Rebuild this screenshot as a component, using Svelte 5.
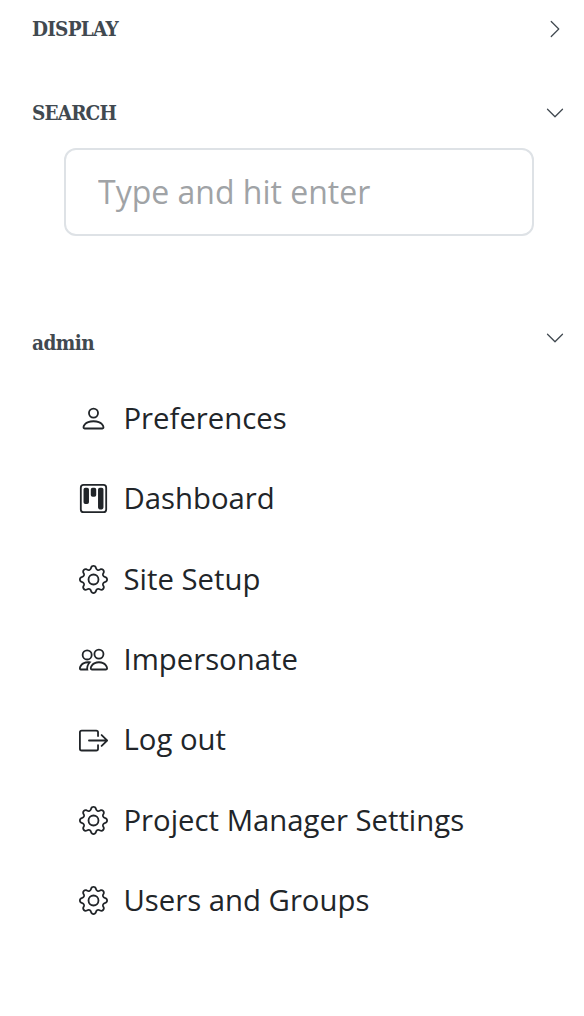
<script>
  const chevrons = {
    right: 'M4.646 1.646a.5.5 0 0 1 .708 0l6 6a.5.5 0 0 1 0 .708l-6 6a.5.5 0 0 1-.708-.708L10.293 8 4.646 2.354a.5.5 0 0 1 0-.708z',
    down: 'M1.646 4.646a.5.5 0 0 1 .708 0L8 10.293l5.646-5.647a.5.5 0 0 1 .708.708l-6 6a.5.5 0 0 1-.708 0l-6-6a.5.5 0 0 1 0-.708z'
  };

  const icons = {
    person: ['M8 8a3 3 0 1 0 0-6 3 3 0 0 0 0 6zm2-3a2 2 0 1 1-4 0 2 2 0 0 1 4 0zm4 8c0 1-1 1-1 1H3s-1 0-1-1 1-4 6-4 6 3 6 4zm-1-.004c-.001-.246-.154-.986-.832-1.664C11.516 10.68 10.289 10 8 10c-2.29 0-3.516.68-4.168 1.332-.678.678-.83 1.418-.832 1.664h10z'],
    kanban: [
      'M13.5 1a1 1 0 0 1 1 1v12a1 1 0 0 1-1 1h-11a1 1 0 0 1-1-1V2a1 1 0 0 1 1-1h11zm-11-1a2 2 0 0 0-2 2v12a2 2 0 0 0 2 2h11a2 2 0 0 0 2-2V2a2 2 0 0 0-2-2h-11z',
      'M6.5 3a1 1 0 0 1 1-1h1a1 1 0 0 1 1 1v3a1 1 0 0 1-1 1h-1a1 1 0 0 1-1-1V3zm-4 0a1 1 0 0 1 1-1h1a1 1 0 0 1 1 1v7a1 1 0 0 1-1 1h-1a1 1 0 0 1-1-1V3zm8 0a1 1 0 0 1 1-1h1a1 1 0 0 1 1 1v10a1 1 0 0 1-1 1h-1a1 1 0 0 1-1-1V3z'
    ],
    gear: [
      'M8 4.754a3.246 3.246 0 1 0 0 6.492 3.246 3.246 0 0 0 0-6.492zM5.754 8a2.246 2.246 0 1 1 4.492 0 2.246 2.246 0 0 1-4.492 0z',
      'M9.796 1.343c-.527-1.79-3.065-1.79-3.592 0l-.094.319a.873.873 0 0 1-1.255.52l-.292-.16c-1.64-.892-3.433.902-2.54 2.541l.159.292a.873.873 0 0 1-.52 1.255l-.319.094c-1.79.527-1.79 3.065 0 3.592l.319.094a.873.873 0 0 1 .52 1.255l-.16.292c-.892 1.64.901 3.434 2.541 2.54l.292-.159a.873.873 0 0 1 1.255.52l.094.319c.527 1.79 3.065 1.79 3.592 0l.094-.319a.873.873 0 0 1 1.255-.52l.292.16c1.64.893 3.434-.902 2.54-2.541l-.159-.292a.873.873 0 0 1 .52-1.255l.319-.094c1.79-.527 1.79-3.065 0-3.592l-.319-.094a.873.873 0 0 1-.52-1.255l.16-.292c.893-1.64-.902-3.433-2.541-2.54l-.292.159a.873.873 0 0 1-1.255-.52l-.094-.319zm-2.633.283c.246-.835 1.428-.835 1.674 0l.094.319a1.873 1.873 0 0 0 2.693 1.115l.291-.16c.764-.415 1.6.42 1.184 1.185l-.159.292a1.873 1.873 0 0 0 1.116 2.692l.318.094c.835.246.835 1.428 0 1.674l-.319.094a1.873 1.873 0 0 0-1.115 2.693l.16.291c.415.764-.42 1.6-1.185 1.184l-.291-.159a1.873 1.873 0 0 0-2.693 1.116l-.094.318c-.246.835-1.428.835-1.674 0l-.094-.319a1.873 1.873 0 0 0-2.692-1.115l-.292.16c-.764.415-1.6-.42-1.184-1.185l.159-.291A1.873 1.873 0 0 0 1.945 8.93l-.319-.094c-.835-.246-.835-1.428 0-1.674l.319-.094A1.873 1.873 0 0 0 3.06 4.377l-.16-.292c-.415-.764.42-1.6 1.185-1.184l.292.159a1.873 1.873 0 0 0 2.692-1.115l.094-.319z'
    ],
    people: ['M15 14s1 0 1-1-1-4-5-4-5 3-5 4 1 1 1 1h8zm-7.978-1A.261.261 0 0 1 7 12.996c.001-.264.167-1.03.76-1.72C8.312 10.629 9.282 10 11 10c1.717 0 2.687.63 3.24 1.276.593.69.758 1.457.76 1.72l-.008.002a.274.274 0 0 1-.014.002H7.022zM11 7a2 2 0 1 0 0-4 2 2 0 0 0 0 4zm3-2a3 3 0 1 1-6 0 3 3 0 0 1 6 0zM6.936 9.28a5.88 5.88 0 0 0-1.23-.247A7.35 7.35 0 0 0 5 9c-4 0-5 3-5 4 0 .667.333 1 1 1h4.216A2.238 2.238 0 0 1 5 13c0-1.01.377-2.042 1.09-2.904.243-.294.526-.569.846-.816zM4.92 10A5.493 5.493 0 0 0 4 13H1c0-.26.164-1.03.76-1.724.545-.636 1.492-1.256 3.16-1.275zM1.5 5.5a3 3 0 1 1 6 0 3 3 0 0 1-6 0zm3-2a2 2 0 1 0 0 4 2 2 0 0 0 0-4z'],
    logout: [
      'M10 12.5a.5.5 0 0 1-.5.5h-8a.5.5 0 0 1-.5-.5v-9a.5.5 0 0 1 .5-.5h8a.5.5 0 0 1 .5.5v2a.5.5 0 0 0 1 0v-2A1.5 1.5 0 0 0 9.5 2h-8A1.5 1.5 0 0 0 0 3.5v9A1.5 1.5 0 0 0 1.5 14h8a1.5 1.5 0 0 0 1.5-1.5v-2a.5.5 0 0 0-1 0v2z',
      'M15.854 8.354a.5.5 0 0 0 0-.708l-3-3a.5.5 0 0 0-.708.708L14.293 7.5H5.5a.5.5 0 0 0 0 1h8.793l-2.147 2.146a.5.5 0 0 0 .708.708l3-3z'
    ]
  };

  const items = [
    { label: 'Preferences', icon: 'person' },
    { label: 'Dashboard', icon: 'kanban' },
    { label: 'Site Setup', icon: 'gear' },
    { label: 'Impersonate', icon: 'people' },
    { label: 'Log out', icon: 'logout' },
    { label: 'Project Manager Settings', icon: 'gear' },
    { label: 'Users and Groups', icon: 'gear' }
  ];

  let open = $state({ display: false, search: true, admin: true });
</script>

{#snippet header(key, label)}
  <button class="section-header {key}" aria-expanded={open[key]} onclick={() => (open[key] = !open[key])}>
    <span class="title">{label}</span>
    <svg class="chevron" viewBox="0 0 16 16" aria-hidden="true">
      <path fill-rule="evenodd" d={open[key] ? chevrons.down : chevrons.right} />
    </svg>
  </button>
{/snippet}

<nav class="toolbar">
  {@render header('display', 'DISPLAY')}

  {@render header('search', 'SEARCH')}
  {#if open.search}
    <form class="search-form" onsubmit={e => e.preventDefault()}>
      <input type="text" placeholder="Type and hit enter" aria-label="Search" />
    </form>
  {/if}

  {@render header('admin', 'admin')}
  {#if open.admin}
    <ul class="menu">
      {#each items as item}
        <li>
          <a href="#{item.icon}">
            <svg class="icon" viewBox="0 0 16 16" aria-hidden="true">
              {#each icons[item.icon] as d}
                <path fill-rule="evenodd" {d} />
              {/each}
            </svg>
            <span class="label">{item.label}</span>
          </a>
        </li>
      {/each}
    </ul>
  {/if}
</nav>

<style>
  :global(body) {
    background: #fff;
  }

  .toolbar {
    box-sizing: border-box;
    height: 1016px;
    padding-top: 8px;
    overflow: hidden;
    font-family: 'Open Sans', 'Noto Sans', sans-serif;
    color: #212529;
  }

  .section-header {
    display: flex;
    align-items: center;
    justify-content: space-between;
    width: 100%;
    height: 41px;
    padding: 0 19px 0 32px;
    border: 0;
    background: none;
    color: #414950;
    cursor: pointer;
  }

  .section-header.search {
    margin-top: 43px;
  }

  .section-header.admin {
    height: 50px;
    margin-top: 82px;
    align-items: flex-start;
  }

  .title {
    padding-top: 1px;
    font: bold 20.5px/40px 'Roboto Slab', 'DejaVu Serif Condensed', 'DejaVu Serif', serif;
    letter-spacing: -0.85px;
  }

  .display .title {
    letter-spacing: -0.75px;
  }

  .admin .title {
    padding-top: 0;
    line-height: 50px;
    letter-spacing: -0.55px;
  }

  .chevron {
    width: 20px;
    height: 20px;
    fill: currentColor;
  }

  .admin .chevron {
    margin-top: 10px;
  }

  .search-form {
    margin: 15px 50px 0 64px;
  }

  input {
    display: block;
    box-sizing: border-box;
    width: 100%;
    height: 88px;
    padding: 0 32px 2px;
    border: 2px solid #dee2e6;
    border-radius: 12px;
    background: #fff;
    font: 32px 'Open Sans', 'Noto Sans', sans-serif;
    color: #212529;
    outline: 0;
  }

  input::placeholder {
    color: #a0a3a6;
    opacity: 1;
  }

  .menu {
    margin: 10.4px 0 0;
    padding: 0 0 0 79px;
    list-style: none;
  }

  .menu a {
    display: flex;
    align-items: center;
    gap: 15.5px;
    height: 80.4px;
    color: inherit;
    font-size: 29.3px;
    text-decoration: none;
  }

  .label {
    padding-bottom: 1.5px;
  }

  .icon {
    width: 29px;
    height: 29px;
    fill: currentColor;
  }
</style>
